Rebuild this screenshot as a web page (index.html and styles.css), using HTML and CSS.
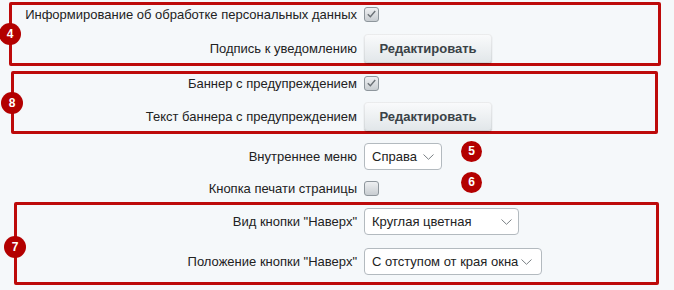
FILE: index.html
```html
<!DOCTYPE html>
<html lang="ru">
<head>
    <meta charset="UTF-8">
    <meta name="viewport" content="width=device-width, initial-scale=1.0">
    <title>Настройки</title>
    <link rel="stylesheet" href="styles.css">
</head>
<body>
    <div class="settings">
        <div class="group group-notice">
            <span class="badge">4</span>
            <div class="row row-check">
                <label class="label">Информирование об обработке персональных данных</label>
                <span class="checkbox checked">
                    <svg viewBox="0 0 14 14" width="14" height="14"><path d="M3 7.2 L5.8 10 L11 3.8" fill="none" stroke="#6b7176" stroke-width="1.5"/></svg>
                </span>
            </div>
            <div class="row row-btn">
                <label class="label">Подпись к уведомлению</label>
                <button class="btn">Редактировать</button>
            </div>
        </div>

        <div class="group group-banner">
            <span class="badge">8</span>
            <div class="row row-check">
                <label class="label">Баннер с предупреждением</label>
                <span class="checkbox checked">
                    <svg viewBox="0 0 14 14" width="14" height="14"><path d="M3 7.2 L5.8 10 L11 3.8" fill="none" stroke="#6b7176" stroke-width="1.5"/></svg>
                </span>
            </div>
            <div class="row row-btn">
                <label class="label">Текст баннера с предупреждением</label>
                <button class="btn">Редактировать</button>
            </div>
        </div>

        <div class="row row-select row-menu">
            <label class="label">Внутреннее меню</label>
            <div class="select select-side">
                <span>Справа</span>
                <svg viewBox="0 0 11 6" width="11" height="6"><path d="M0.5 0.5 L5.5 5.3 L10.5 0.5" fill="none" stroke="#7a8085" stroke-width="1"/></svg>
            </div>
            <span class="badge badge-menu">5</span>
        </div>

        <div class="row row-check row-print">
            <label class="label">Кнопка печати страницы</label>
            <span class="checkbox"></span>
            <span class="badge badge-print">6</span>
        </div>

        <div class="group group-up">
            <span class="badge">7</span>
            <div class="row row-select">
                <label class="label">Вид кнопки "Наверх"</label>
                <div class="select select-type">
                    <span>Круглая цветная</span>
                    <svg viewBox="0 0 11 6" width="11" height="6"><path d="M0.5 0.5 L5.5 5.3 L10.5 0.5" fill="none" stroke="#7a8085" stroke-width="1"/></svg>
                </div>
            </div>
            <div class="row row-select">
                <label class="label">Положение кнопки "Наверх"</label>
                <div class="select select-pos">
                    <span>С отступом от края окна</span>
                    <svg viewBox="0 0 11 6" width="11" height="6"><path d="M0.5 0.5 L5.5 5.3 L10.5 0.5" fill="none" stroke="#7a8085" stroke-width="1"/></svg>
                </div>
            </div>
        </div>
    </div>
</body>
</html>
```

FILE: styles.css
```css
body {
    margin: 0;
    background: #f5f8fa;
    font-family: "Liberation Sans", Arial, sans-serif;
    font-size: 13px;
    color: #222;
}
.settings {
    width: 674px;
    padding-top: 2px;
}
.group {
    position: relative;
    border: 3px solid #bd0a0a;
    border-radius: 2px;
    --left: 0px;
}
.group-notice {
    margin-left: 9px;
    width: 646px;
    --left: 12px;
}
.group-banner {
    margin-top: 5px;
    margin-left: 11px;
    width: 641px;
    --left: 14px;
}
.group-up {
    margin-top: 5px;
    margin-left: 14px;
    width: 639px;
    padding: 3px 0 7px;
    --left: 17px;
}
.row {
    position: relative;
    display: flex;
    align-items: center;
    gap: 7px;
}
.label {
    width: calc(357px - var(--left, 0px));
    text-align: right;
    flex-shrink: 0;
}
.row-check {
    height: 18px;
}
.row-btn {
    margin-top: 10px;
    height: 29px;
}
.group-notice .row-btn {
    margin-top: 11px;
}
.row-select {
    height: 27px;
}
.row-select + .row-select {
    margin-top: 13px;
}
.row-menu {
    margin-top: 9px;
}
.row-print {
    margin-top: 9px;
}
.checkbox {
    box-sizing: border-box;
    width: 15px;
    height: 15px;
    border: 1px solid #8e969c;
    border-radius: 3px;
    background: linear-gradient(#eef0f2, #c8cdd1);
    display: flex;
    align-items: center;
    justify-content: center;
}
.checkbox svg {
    display: block;
}
.btn {
    width: 128px;
    height: 29px;
    border: none;
    border-radius: 4px;
    background: linear-gradient(#fafbfc, #e1e6e9);
    box-shadow: 0 1px 1px rgba(0, 0, 0, 0.3), inset 0 0 0 1px rgba(0, 0, 0, 0.06);
    font-family: "Liberation Sans", Arial, sans-serif;
    font-size: 13px;
    font-weight: bold;
    color: #3a4247;
    padding: 0;
    cursor: pointer;
}
.select {
    box-sizing: border-box;
    height: 27px;
    display: flex;
    align-items: center;
    justify-content: space-between;
    padding: 0 7px 0 7px;
    background: #fff;
    border: 1px solid #b3babf;
    border-radius: 4px;
    font-size: 13px;
    color: #222;
    white-space: nowrap;
}
.select svg {
    display: block;
    flex-shrink: 0;
}
.select-side {
    width: 78px;
}
.select-type {
    width: 155px;
    padding-right: 6px;
}
.select-pos {
    width: 178px;
    padding-right: 9px;
}
.badge {
    position: absolute;
    width: 22px;
    height: 22px;
    border-radius: 50%;
    background: #b30000;
    color: #fff;
    font-weight: bold;
    font-size: 12px;
    line-height: 22px;
    text-align: center;
}
.group .badge {
    left: -13px;
    top: 50%;
    margin-top: -11px;
}
.group-up .badge {
    margin-top: -8px;
}
.badge-menu {
    width: 21px;
    height: 21px;
    line-height: 21px;
    left: 461px;
    top: -2px;
}
.badge-print {
    width: 21px;
    height: 21px;
    line-height: 21px;
    left: 461px;
    top: -7px;
}
```
